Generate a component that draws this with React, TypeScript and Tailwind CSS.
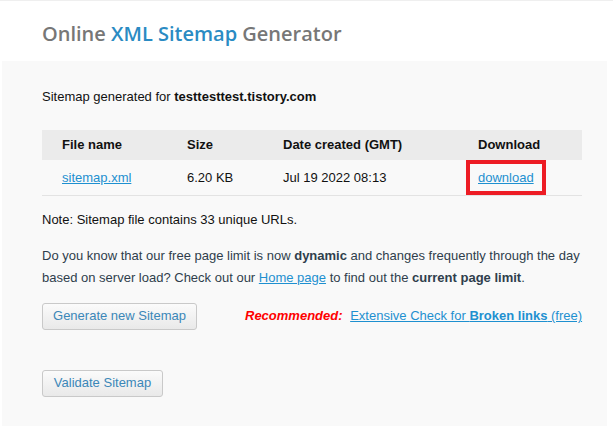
import React from "react";

const body = { fontFamily: '"Liberation Sans", Arial, sans-serif' };

export default function App() {
  return (
    <div className="min-h-[426px] w-[613px] bg-white border-t border-[#efefef]" style={body}>
      <h1
        className="h-[60px] pl-[42px] pt-[19px] text-[20px] font-semibold leading-[28px] text-[#777]"
        style={{ fontFamily: '"Open Sans", sans-serif' }}
      >
        Online <span className="text-[#2a8bc3]">XML Sitemap</span> Generator
      </h1>

      <div className="ml-[2px] w-[605px] min-h-[365px] bg-[#f9f9f9] pl-[40px] pt-[26px] text-[13px] text-[#111]">
        <p className="leading-[20px]">
          Sitemap generated for <b>testtesttest.tistory.com</b>
        </p>

        {/* results table */}
        <table className="mt-[23px] w-[540px] border-collapse text-left">
          <thead>
            <tr className="h-[30px] bg-[#ebebeb]">
              <th className="w-[125px] pl-[20px] font-bold">File name</th>
              <th className="w-[96px] pl-[20px] font-bold">Size</th>
              <th className="w-[195px] pl-[20px] font-bold">Date created (GMT)</th>
              <th className="pl-[20px] font-bold">Download</th>
            </tr>
          </thead>
          <tbody>
            <tr className="h-[35px] border-b border-[#e3e3e3]">
              <td className="pl-[20px]">
                <a href="#" className="text-[#1e90d0] underline">sitemap.xml</a>
              </td>
              <td className="pl-[20px]">6.20 KB</td>
              <td className="pl-[20px]">Jul 19 2022 08:13</td>
              <td className="relative pl-[20px]">
                <a href="#" className="text-[#1e90d0] underline">download</a>
                <span className="absolute left-[8px] top-0 h-[35px] w-[80px] border-4 border-[#ed1c24]" />
              </td>
            </tr>
          </tbody>
        </table>

        <p className="mt-[14px] leading-[20px]">Note: Sitemap file contains 33 unique URLs.</p>

        <p className="mt-[15px] w-[545px] leading-[22px] text-[#2f3e4c]">
          Do you know that our free page limit is now <b>dynamic</b> and changes frequently through the day
          based on server load? Check out our{" "}
          <a href="#" className="text-[#1e90d0] underline">Home page</a> to find out the{" "}
          <b>current page limit</b>.
        </p>

        <div className="mt-[14px] flex items-center gap-[48px]">
          <button className="h-[27px] w-[155px] rounded-[3px] border border-[#c9c9c9] bg-gradient-to-b from-[#fbfbfb] to-[#e9e9e9] text-[13px] text-[#3b87b8]">
            Generate new Sitemap
          </button>
          <p>
            <i className="font-bold text-[#ff0000]">Recommended:</i>{" "}
            <a href="#" className="ml-[4px] text-[#1e90d0] underline">
              Extensive Check for <b>Broken links</b> (free)
            </a>
          </p>
        </div>

        <button className="mt-[40px] h-[27px] w-[121px] rounded-[3px] border border-[#c9c9c9] bg-gradient-to-b from-[#fbfbfb] to-[#e9e9e9] text-[13px] text-[#3b87b8]">
          Validate Sitemap
        </button>
      </div>
    </div>
  );
}
